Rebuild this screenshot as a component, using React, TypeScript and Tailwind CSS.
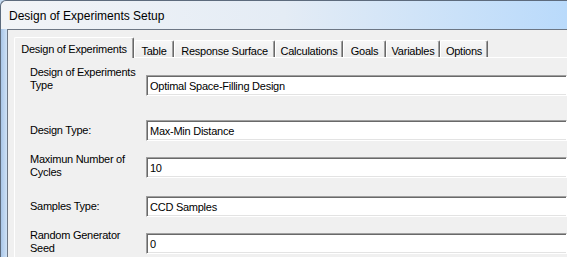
import React from "react";

const font = { fontFamily: '"Liberation Sans", Arial, sans-serif' };

const tabs: { label: string; w: string; active?: boolean }[] = [
  { label: "Design of Experiments", w: "w-[120px]", active: true },
  { label: "Table", w: "w-[40px]" },
  { label: "Response Surface", w: "w-[101px]" },
  { label: "Calculations", w: "w-[68px]" },
  { label: "Goals", w: "w-[43px]" },
  { label: "Variables", w: "w-[54px]" },
  { label: "Options", w: "w-[48px]" },
];

function Field({ value, className = "" }: { value: string; className?: string }) {
  return (
    <div
      className={`h-[21px] flex-1 flex items-center pl-[3px] bg-white border border-t-[#a0a0a0] border-l-[#a0a0a0] border-b-white border-r-white shadow-[inset_1px_1px_0_#696969,inset_0_-1px_0_#e3e3e3] text-[11px] tracking-[-0.25px] text-black ${className}`}
    >
      <span className="pt-[1px]">{value}</span>
    </div>
  );
}

export default function App() {
  return (
    <div
      className="w-[567px] h-[257px] overflow-hidden flex flex-col bg-[#c4daf1] text-black"
      style={font}
    >
      {/* title bar */}
      <div className="h-[29px] shrink-0 flex items-center pl-[8px] border-t border-l border-[#5d6b7d] rounded-tl-[6px] bg-gradient-to-r from-[#f2f4f7] via-[#e4ecf5] to-[#b9dafb]">
        <span className="text-[12px] leading-none pt-[1px]">Design of Experiments Setup</span>
      </div>
      {/* body */}
      <div className="flex flex-1 min-h-0">
        <div className="w-[7px] shrink-0 border-l border-[#5d6b7d] bg-gradient-to-r from-[#a9c6e8] to-[#cfe2f6]" />
        <div className="flex-1 flex flex-col bg-[#f0f0f0] border-t border-l border-[#6c7684] pt-[7px] pl-[6px]">
          {/* tab strip */}
          <div className="h-[20px] flex items-end relative z-10">
            {tabs.map((t) =>
              t.active ? (
                <div
                  key={t.label}
                  className={`${t.w} h-[21px] -mb-px flex items-start justify-center pt-[3px] bg-[#f0f0f0] border-t border-l border-white border-r border-r-[#696969] rounded-t-[2px] shadow-[inset_-1px_0_0_#a0a0a0] text-[11px] tracking-[-0.25px]`}
                >
                  {t.label}
                </div>
              ) : (
                <div
                  key={t.label}
                  className={`${t.w} h-[17px] flex items-start justify-center pt-[2px] bg-gradient-to-b from-[#f7f7f7] to-[#ececec] border-t border-l border-white border-r border-r-[#696969] rounded-t-[2px] shadow-[inset_-1px_0_0_#a0a0a0] text-[11px] tracking-[-0.25px]`}
                >
                  {t.label}
                </div>
              )
            )}
          </div>
          {/* panel */}
          <div className="flex-1 border-t border-l border-white pl-[15px] pt-[8px] text-[11px] tracking-[-0.25px] leading-[13px]">
            <div className="flex items-start">
              <div className="w-[116px] shrink-0">
                Design of Experiments
                <br />
                Type
              </div>
              <Field value="Optimal Space-Filling Design" className="mt-[9px]" />
            </div>
            <div className="flex items-start mt-[24px]">
              <div className="w-[116px] shrink-0 mt-[4px]">Design Type:</div>
              <Field value="Max-Min Distance" />
            </div>
            <div className="flex items-start mt-[11px]">
              <div className="w-[116px] shrink-0 mt-[1px]">
                Maximun Number of
                <br />
                Cycles
              </div>
              <Field value="10" className="mt-[5px]" />
            </div>
            <div className="flex items-start mt-[17px]">
              <div className="w-[116px] shrink-0 mt-[4px]">Samples Type:</div>
              <Field value="CCD Samples" />
            </div>
            <div className="flex items-start mt-[12px]">
              <div className="w-[116px] shrink-0">
                Random Generator
                <br />
                Seed
              </div>
              <Field value="0" className="mt-[4px]" />
            </div>
          </div>
        </div>
      </div>
    </div>
  );
}
